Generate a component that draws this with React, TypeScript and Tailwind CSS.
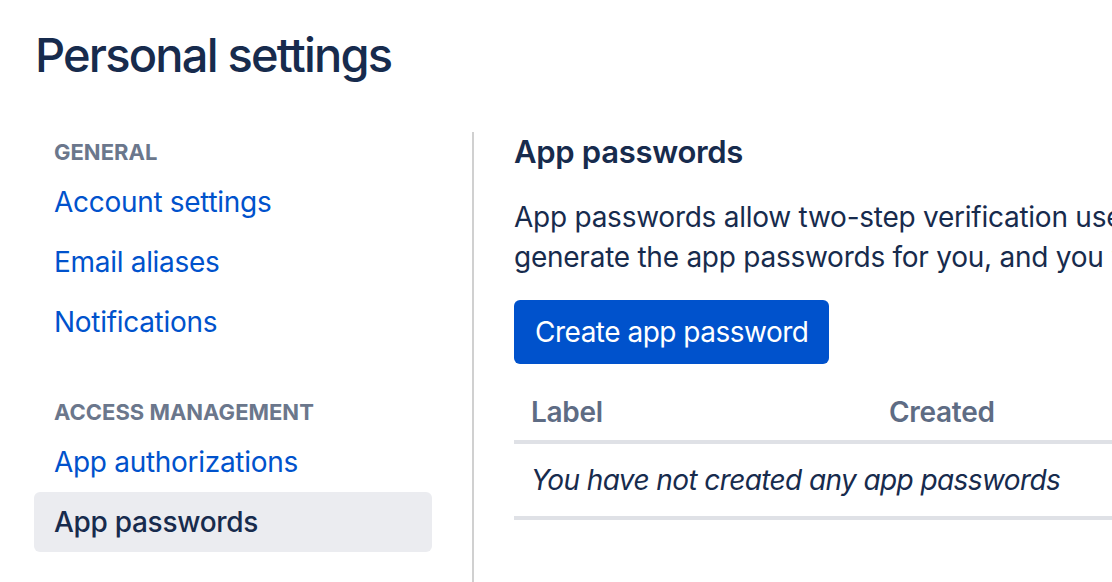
import React from 'react';

const general = ['Account settings', 'Email aliases', 'Notifications'];
const access = ['App authorizations', 'App passwords'];

function SectionLabel({ children }: { children: React.ReactNode }) {
  return (
    <div className="h-10 pl-5 flex items-center text-[22px] font-bold uppercase text-[#6b778c]">
      {children}
    </div>
  );
}

function NavItem({ label, active }: { label: string; active?: boolean }) {
  return (
    <a
      href="#"
      className={
        active
          ? 'h-[60px] pl-5 flex items-center rounded-[6px] bg-[#ebecf0] text-[28px] font-medium tracking-[-0.3px] text-[#172b4d]'
          : 'h-[60px] pl-5 flex items-center text-[28px] tracking-[-0.3px] text-[#0052cc]'
      }
    >
      {label}
    </a>
  );
}

export default function App() {
  return (
    <div
      className="w-[1112px] h-[582px] overflow-hidden bg-white"
      style={{ fontFamily: 'Inter, "Noto Sans", sans-serif' }}
    >
      <h1 className="pt-[27px] pl-[35px] text-[47px] leading-[56px] font-medium tracking-[-1.8px] text-[#172b4d]">
        Personal settings
      </h1>

      <div className="flex mt-[49px] h-[450px]">
        <nav className="w-[398px] ml-[34px] shrink-0">
          <SectionLabel>General</SectionLabel>
          {general.map((l) => (
            <NavItem key={l} label={l} />
          ))}
          <div className="mt-10">
            <SectionLabel>Access management</SectionLabel>
          </div>
          {access.map((l) => (
            <NavItem key={l} label={l} active={l === 'App passwords'} />
          ))}
        </nav>

        <div className="w-[2px] ml-10 shrink-0 bg-[#d0d0d0]" />

        <main className="ml-10 w-[1000px] shrink-0 text-[#172b4d]">
          <h2 className="text-[31px] leading-10 font-semibold tracking-[-0.3px]">App passwords</h2>
          <p className="mt-[25px] text-[28px] leading-10 tracking-[-0.25px] whitespace-nowrap">
            <span className="block">
              App passwords allow two-step verification users to access their Bitbucket account through apps such as Sourcetree. We'll
            </span>
            <span className="block">generate the app passwords for you, and you won't need to remember them.</span>
          </p>
          <button className="mt-[23px] h-16 px-[21px] rounded-[6px] bg-[#0052cc] text-white text-[28px] tracking-[-0.5px]">
            Create app password
          </button>

          <table className="mt-[28px] w-[1000px] border-collapse text-left">
            <thead>
              <tr className="border-b-4 border-[#dfe1e6]">
                <th className="w-[358px] pl-[17px] pb-2 text-[28px] leading-10 font-semibold tracking-[-0.3px] text-[#5e6c84]">Label</th>
                <th className="pl-[17px] pb-2 text-[28px] leading-10 font-semibold tracking-[-0.3px] text-[#5e6c84]">Created</th>
                <th className="pl-[17px] pb-2 text-[28px] leading-10 font-semibold tracking-[-0.3px] text-[#5e6c84]">Last used</th>
              </tr>
            </thead>
            <tbody>
              <tr className="border-b-4 border-[#dfe1e6]">
                <td colSpan={3} className="pl-[17px] py-4 text-[28px] leading-10 italic tracking-[-0.6px]">
                  You have not created any app passwords
                </td>
              </tr>
            </tbody>
          </table>
        </main>
      </div>
    </div>
  );
}
